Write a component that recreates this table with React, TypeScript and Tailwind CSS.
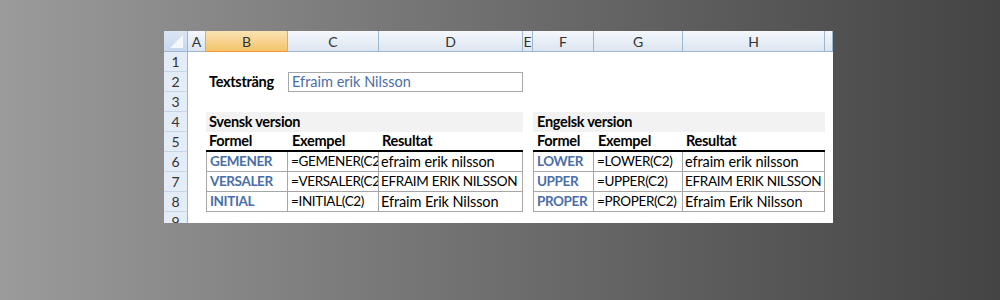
import React from "react";

const COLS = [
  { k: "A", w: 18 },
  { k: "B", w: 82 },
  { k: "C", w: 91 },
  { k: "D", w: 144 },
  { k: "E", w: 10 },
  { k: "F", w: 61 },
  { k: "G", w: 89 },
  { k: "H", w: 142 },
  { k: "", w: 8 },
];

const font = { fontFamily: "Lato, 'Liberation Sans', sans-serif" };

function ColHeader() {
  return (
    <div className="flex h-[21px]">
      <div className="w-[24px] h-[21px] bg-gradient-to-b from-[#dbe6f4] to-[#c8d8ee] border-r border-b border-[#9eb6ce] relative">
        <svg width="23" height="20" className="absolute left-0 top-0">
          <polygon points="19,4 19,17 6,17" fill="#f4f7fb" />
        </svg>
      </div>
      {COLS.map((c, i) => (
        <div
          key={i}
          style={{ width: c.w }}
          className={
            c.k === "B"
              ? "h-[21px] flex items-center justify-center border-r border-b border-[#e8a854] border-b-[#f29436] bg-gradient-to-b from-[#fbe3b3] to-[#f3c46a] text-[14px] text-[#333]"
              : "h-[21px] flex items-center justify-center border-r border-b border-[#9eb6ce] bg-gradient-to-b from-[#f5f8fc] to-[#dce5f1] text-[14px] text-[#333]"
          }
        >
          {c.k}
        </div>
      ))}
    </div>
  );
}

function RowHead({ n, h = 20 }: { n: number; h?: number }) {
  return (
    <div
      style={{ height: h }}
      className="w-[24px] shrink-0 flex items-start justify-center pt-[1px] bg-[#e4ecf7] border-r border-b border-[#9eb6ce] border-b-[#c5d4e6] text-[14px] text-[#333] overflow-hidden leading-[18px]"
    >
      {n}
    </div>
  );
}

function Cell({
  w,
  children,
  cls = "",
}: {
  w: number;
  children?: React.ReactNode;
  cls?: string;
}) {
  return (
    <div
      style={{ width: w }}
      className={"h-[20px] shrink-0 flex items-center whitespace-nowrap overflow-hidden " + cls}
    >
      {children}
    </div>
  );
}

const blue = "text-[#4a6ea8] font-bold text-[13.5px] tracking-[-0.4px]";
const bold = "text-black font-bold text-[14.5px] tracking-[-0.3px]";
const formula = "text-black text-[13.5px] tracking-[-0.35px]";
const mixed = "text-black text-[14.5px] tracking-[-0.1px]";
const caps = "text-black text-[13.5px] tracking-[-0.3px]";

function resCls(s: string) {
  return s === s.toUpperCase() ? caps : mixed;
}

export default function App() {
  const sv = [
    ["GEMENER", "=GEMENER(C2)", "efraim erik nilsson"],
    ["VERSALER", "=VERSALER(C2)", "EFRAIM ERIK NILSSON"],
    ["INITIAL", "=INITIAL(C2)", "Efraim Erik Nilsson"],
  ];
  const en = [
    ["LOWER", "=LOWER(C2)", "efraim erik nilsson"],
    ["UPPER", "=UPPER(C2)", "EFRAIM ERIK NILSSON"],
    ["PROPER", "=PROPER(C2)", "Efraim Erik Nilsson"],
  ];
  return (
    <div className="w-[1000px] h-[300px] bg-gradient-to-r from-[#9b9b9b] to-[#444444] pl-[164px] pt-[31px] overflow-hidden">
      <div className="w-[669px] h-[192px] bg-white overflow-hidden" style={font}>
        <ColHeader />
        <div className="flex">
          <RowHead n={1} />
        </div>
        <div className="flex">
          <RowHead n={2} />
          <Cell w={18} />
          <Cell w={82} cls={"pl-[3px] " + bold}>Textsträng</Cell>
          <Cell w={235} cls="border border-[#a6a6a6] pl-[3px] text-[#4a6ea8] text-[14.5px] tracking-[0px]">Efraim erik Nilsson</Cell>
        </div>
        <div className="flex">
          <RowHead n={3} />
        </div>
        <div className="flex">
          <RowHead n={4} />
          <Cell w={18} />
          <Cell w={317} cls={"bg-[#f2f2f2] pl-[3px] " + bold}>Svensk version</Cell>
          <Cell w={10} />
          <Cell w={292} cls={"bg-[#f2f2f2] pl-[4px] " + bold}>Engelsk version</Cell>
        </div>
        <div className="flex">
          <RowHead n={5} />
          <Cell w={18} />
          <Cell w={82} cls={"pl-[3px] border-b-2 border-black " + bold}>Formel</Cell>
          <Cell w={91} cls={"pl-[4px] border-b-2 border-black " + bold}>Exempel</Cell>
          <Cell w={144} cls={"pl-[3px] border-b-2 border-black " + bold}>Resultat</Cell>
          <Cell w={10} />
          <Cell w={61} cls={"pl-[4px] border-b-2 border-black " + bold}>Formel</Cell>
          <Cell w={89} cls={"pl-[4px] border-b-2 border-black " + bold}>Exempel</Cell>
          <Cell w={142} cls={"pl-[3px] border-b-2 border-black " + bold}>Resultat</Cell>
        </div>
        {sv.map((r, i) => (
          <div className="flex" key={i}>
            <RowHead n={6 + i} />
            <Cell w={18} />
            <Cell w={82} cls={"pl-[3px] border-l border-r border-b border-[#a6a6a6] " + blue}>{r[0]}</Cell>
            <Cell w={91} cls={"pl-[3px] border-r border-b border-[#a6a6a6] " + formula}>{r[1]}</Cell>
            <Cell w={144} cls={"pl-[2px] border-r border-b border-[#a6a6a6] " + resCls(r[2])}>{r[2]}</Cell>
            <Cell w={10} />
            <Cell w={61} cls={"pl-[3px] border-l border-r border-b border-[#a6a6a6] " + blue}>{en[i][0]}</Cell>
            <Cell w={89} cls={"pl-[3px] border-r border-b border-[#a6a6a6] " + formula}>{en[i][1]}</Cell>
            <Cell w={142} cls={"pl-[2px] border-r border-b border-[#a6a6a6] " + resCls(en[i][2])}>{en[i][2]}</Cell>
          </div>
        ))}
        <div className="flex">
          <RowHead n={9} />
        </div>
      </div>
    </div>
  );
}
